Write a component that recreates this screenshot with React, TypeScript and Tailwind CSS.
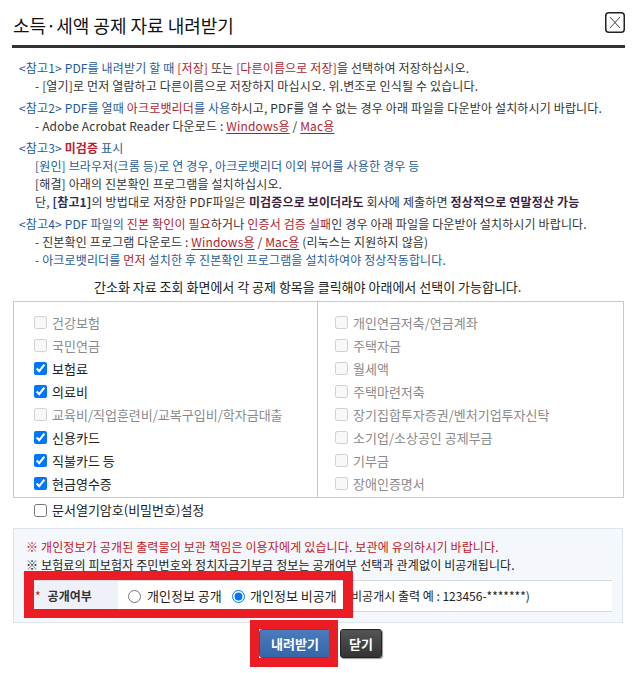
const BLUE = 'text-[#1f5c99]';
const RED = 'text-[#b01c2e]';

function Link({ children }: { children: React.ReactNode }) {
  return <span className="text-[#b01c2e] underline underline-offset-2">{children}</span>;
}

function Check({ label, checked, disabled }: { label: string; checked?: boolean; disabled?: boolean }) {
  return (
    <label className="flex h-[23px] items-center gap-[5px]">
      <input type="checkbox" className="m-0 h-[13px] w-[13px]" defaultChecked={checked} disabled={disabled} />
      <span className={disabled ? 'text-[#8a8a8a]' : 'text-[#222]'}>{label}</span>
    </label>
  );
}

const leftItems = [
  { label: '건강보험', disabled: true },
  { label: '국민연금', disabled: true },
  { label: '보험료', checked: true },
  { label: '의료비', checked: true },
  { label: '교육비/직업훈련비/교복구입비/학자금대출', disabled: true },
  { label: '신용카드', checked: true },
  { label: '직불카드 등', checked: true },
  { label: '현금영수증', checked: true },
];

const rightItems = [
  '개인연금저축/연금계좌',
  '주택자금',
  '월세액',
  '주택마련저축',
  '장기집합투자증권/벤처기업투자신탁',
  '소기업/소상공인 공제부금',
  '기부금',
  '장애인증명서',
];

export default function App() {
  return (
    <div className="h-[673px] w-[637px] overflow-hidden bg-white px-[12px] font-['Noto_Sans_CJK_KR',sans-serif] text-[12px] text-[#333]">
      {/* Header */}
      <div className="flex h-[48px] items-start justify-between border-b-[3px] border-[#333]">
        <h1 className="ml-[1px] mt-[13px] text-[18px] leading-[24px] text-[#111]">소득·세액 공제 자료 내려받기</h1>
        <button className="mt-[12px]" aria-label="닫기">
          <svg width="20" height="21" viewBox="0 0 20 21">
            <rect x="0.75" y="0.75" width="18.5" height="19.5" rx="3" fill="white" stroke="#222" strokeWidth="1.5" />
            <path d="M5 5 L15 16 M15 5 L5 16" stroke="#444" strokeWidth="1" />
          </svg>
        </button>
      </div>

      {/* Notes */}
      <div className="mt-[11px] pl-[7px] leading-[18px] tracking-[0.15px]">
        <div>
          <p>
            <span className={BLUE}>&lt;참고1&gt; PDF를 내려받기 할 때 </span>
            <span className={RED}>[저장]</span> 또는 <span className={RED}>[다른이름으로 저장]</span>을 선택하여 저장하십시오.
          </p>
          <p className="pl-[16px]">- [열기]로 먼저 열람하고 다른이름으로 저장하지 마십시오. 위.변조로 인식될 수 있습니다.</p>
        </div>
        <div className="mt-[4px]">
          <p>
            <span className={BLUE}>&lt;참고2&gt; PDF를 열때 </span>
            <span className={RED}>아크로뱃리더</span>
            <span className={BLUE}>를 사용</span>하시고, PDF를 열 수 없는 경우 아래 파일을 다운받아 설치하시기 바랍니다.
          </p>
          <p className="pl-[16px]">
            - Adobe Acrobat Reader 다운로드 : <Link>Windows용</Link> / <Link>Mac용</Link>
          </p>
        </div>
        <div className="mt-[4px]">
          <p className={BLUE}>
            &lt;참고3&gt; <span className="font-bold text-[#c0182c]">미검증</span> 표시
          </p>
          <p className={`pl-[16px] ${BLUE}`}>[원인] 브라우저(크롬 등)로 연 경우, 아크로뱃리더 이외 뷰어를 사용한 경우 등</p>
          <p className="pl-[16px]">[해결] 아래의 진본확인 프로그램을 설치하십시오.</p>
          <p className="pl-[16px]">
            단, <b className="text-[#2b2f5c]">[참고1]</b>의 방법대로 저장한 PDF파일은{' '}
            <b className="text-[#3b2440]">미검증으로 보이더라도</b> 회사에 제출하면{' '}
            <b className="text-[#3b2440]">정상적으로 연말정산 가능</b>
          </p>
        </div>
        <div className="mt-[4px]">
          <p>
            <span className={BLUE}>&lt;참고4&gt; PDF 파일의 </span>
            <span className={RED}>진본 확인이 필요</span>하거나 <span className={RED}>인증서 검증 실패</span>인 경우 아래 파일을 다운받아 설치하시기 바랍니다.
          </p>
          <p className="pl-[16px]">
            - 진본확인 프로그램 다운로드 : <Link>Windows용</Link> / <Link>Mac용</Link> (리눅스는 지원하지 않음)
          </p>
          <p className={`pl-[16px] ${BLUE}`}>
            - 아크로뱃리더를 <span className={RED}>먼저</span> 설치한 후 진본확인 프로그램을 설치하여야 정상작동합니다.
          </p>
        </div>
      </div>

      <p className="mt-[9px] pl-[82px] text-[13px] leading-[18px] text-[#222]">
        간소화 자료 조회 화면에서 각 공제 항목을 클릭해야 아래에서 선택이 가능합니다.
      </p>

      {/* Items */}
      <div className="mx-[1px] mt-[5px] grid grid-cols-[304px_1fr] border border-[#c9c9c9] text-[13px]">
        <div className="border-r border-[#c9c9c9] pb-[2px] pl-[20px] pt-[9px]">
          {leftItems.map((it) => (
            <Check key={it.label} {...it} />
          ))}
        </div>
        <div className="pb-[2px] pl-[17px] pt-[9px]">
          {rightItems.map((l) => (
            <Check key={l} label={l} disabled />
          ))}
        </div>
      </div>

      <label className="mt-[3px] flex h-[18px] items-center gap-[5px] pl-[22px] text-[13px] text-[#222]">
        <input type="checkbox" className="m-0 h-[13px] w-[13px]" />
        문서열기암호(비밀번호)설정
      </label>

      {/* Privacy notice */}
      <div className="ml-[1px] mr-[2px] mt-[9px] border border-[#dfe5ee] bg-[#f4f7fb] pb-[10px] pl-[12px] pr-[10px] pt-[9px] leading-[18px] tracking-[0.15px]">
        <p className="text-[#c4161c]">※ 개인정보가 공개된 출력물의 보관 책임은 이용자에게 있습니다. 보관에 유의하시기 바랍니다.</p>
        <p className="text-[#222]">※ 보험료의 피보험자 주민번호와 정치자금기부금 정보는 공개여부 선택과 관계없이 비공개됩니다.</p>
        <div className="relative ml-[8px] mt-[6px] flex h-[32px] border-y border-[#d5d9e0] bg-white tracking-normal">
          <div className="flex w-[84px] items-center bg-[#eef1f7] pl-[1px]">
            <span className="text-[#c4161c]">*</span>
            <b className="ml-[7px] text-[#333]">공개여부</b>
          </div>
          <div className="flex items-center text-[#222]">
            <input type="radio" name="open" className="m-0 ml-[10px] h-[13px] w-[13px]" />
            <span className="ml-[6px] w-[85px] text-[13px]">개인정보 공개</span>
            <input type="radio" name="open" defaultChecked className="m-0 h-[13px] w-[13px]" />
            <span className="ml-[5px] w-[97px] text-[13px]">개인정보 비공개</span>
            <span>(비공개시 출력 예 : 123456-*******)</span>
          </div>
          <div className="pointer-events-none absolute left-[-10px] top-[-10px] h-[47px] w-[329px] border-x-[10px] border-y-[9px] border-[#ec1c24]" />
        </div>
      </div>

      {/* Buttons */}
      <div className="mt-[6px] flex justify-center gap-[9px] pl-[4px]">
        <div className="relative">
          <button className="h-[29px] w-[72px] rounded-[3px] border border-[#3b4f8f] bg-gradient-to-b from-[#4a7cbd] to-[#3466a8] text-[13px] font-bold text-white">
            내려받기
          </button>
          <div className="pointer-events-none absolute bottom-[-9px] left-[-9px] right-[-7px] top-[-9px] border-[9px] border-[#ec1c24]" />
        </div>
        <button className="h-[29px] w-[42px] rounded-[3px] border border-[#222] bg-gradient-to-b from-[#555] to-[#333] text-[13px] font-bold text-white shadow-[1px_1px_1px_rgba(0,0,0,0.4)]">
          닫기
        </button>
      </div>
    </div>
  );
}
